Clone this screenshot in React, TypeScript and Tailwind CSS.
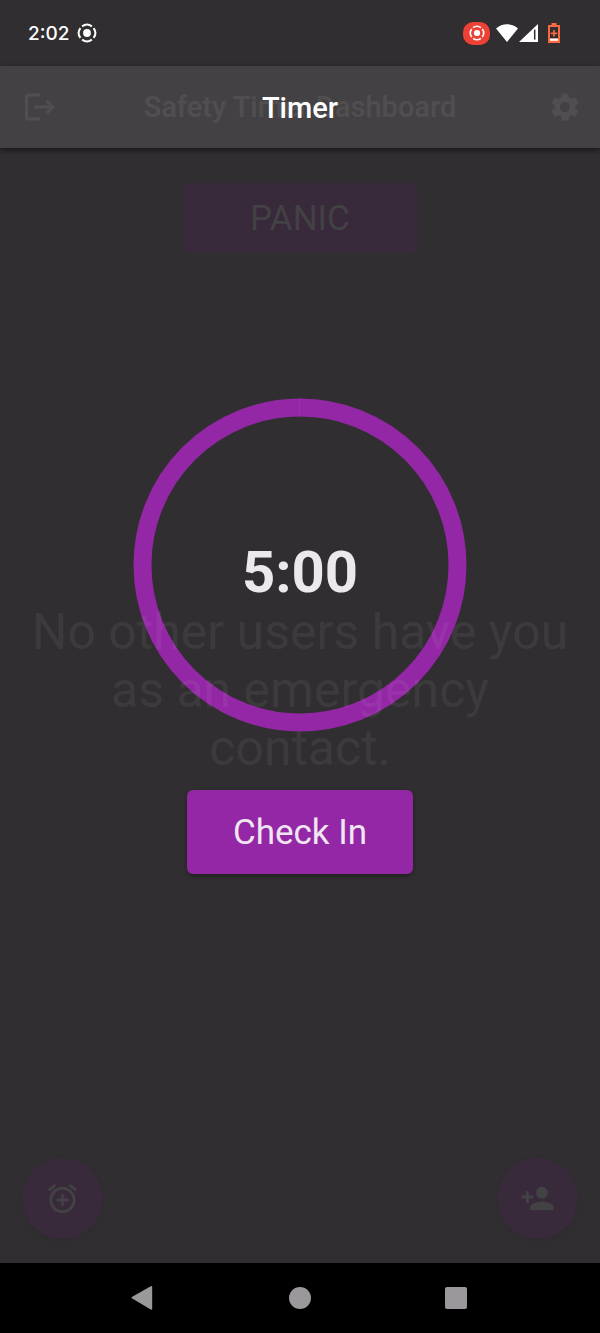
import React from "react";
import { MdAddAlarm, MdLogout, MdPersonAdd, MdSettings } from "react-icons/md";

function RecordIcon({ className }: { className: string }) {
  return (
    <svg viewBox="0 0 20 20" className={className} fill="none" aria-hidden="true">
      <circle cx="10" cy="10" r="3.9" fill="currentColor" />
      <g stroke="currentColor" strokeWidth="2">
        <path d="M5.1 3.4A8.2 8.2 0 0 1 14.9 3.4" />
        <path d="M16.6 5.1A8.2 8.2 0 0 1 16.6 14.9" />
        <path d="M14.9 16.6A8.2 8.2 0 0 1 5.1 16.6" />
        <path d="M3.4 14.9A8.2 8.2 0 0 1 3.4 5.1" />
      </g>
    </svg>
  );
}

function StatusBar() {
  return (
    <div className="flex h-[66px] items-center bg-[#302e30] pr-10 pl-7 text-white">
      <span className="pt-0.5 font-['Inter',sans-serif] text-[19px] leading-6 font-medium">2:02</span>
      <RecordIcon className="ml-2 size-5" />
      <div className="ml-auto flex items-center">
        <span className="flex h-[23px] w-[27px] items-center justify-center rounded-[10px] bg-[#ec4135]">
          <RecordIcon className="size-4" />
        </span>
        <svg viewBox="0 0 22 18" className="ml-1.5 h-[18px] w-[22px]" aria-hidden="true">
          <path d="M0 4.6C6 -1.2 16 -1.2 22 4.6L11 18Z" fill="currentColor" />
        </svg>
        <svg viewBox="0 0 19 18" className="ml-px h-[18px] w-[19px]" aria-hidden="true">
          <path d="M0 18L19 0V18Z" fill="currentColor" />
          <path d="M15.7 5.6V15.6" stroke="#302e30" strokeWidth="1.5" />
        </svg>
        <svg viewBox="0 0 12 20" className="ml-2.5 h-5 w-3" aria-hidden="true">
          <path d="M3.5 0H8.5V2H12V20H0V2H3.5Z" fill="#f9683e" />
          <path d="M2 4H10V15.5H2Z" fill="#302e30" />
          <path d="M6 7V13.6M2.8 10.3H9.2" stroke="#f9683e" strokeWidth="1.7" />
          <path d="M2 15.5H10V17.8H2Z" fill="#fff" />
        </svg>
      </div>
    </div>
  );
}

function TimerScreen() {
  return (
    <section className="col-start-1 row-start-1 flex flex-col">
      <header className="flex h-[82px] items-center justify-center bg-[#434143] pt-0.5 shadow-[0_2px_6px_rgba(0,0,0,0.55)]">
        <h1 className="text-[29px] leading-9 font-medium text-white">Timer</h1>
      </header>
      <div className="flex flex-1 flex-col items-center justify-center pb-[140px]">
        <div className="grid place-items-center">
          <svg viewBox="0 0 334 334" className="col-start-1 row-start-1 size-[334px]" aria-hidden="true">
            <circle cx="167" cy="167" r="157.5" fill="none" stroke="#9327a5" strokeWidth="18" />
            <path d="M166.5 0.5V18.5" stroke="#9a33ab" strokeWidth="1" />
          </svg>
          <p className="col-start-1 row-start-1 pt-3.5 text-[58px] leading-[68px] font-bold text-[#ebe9eb]">
            5:00
          </p>
        </div>
        <button
          type="button"
          className="mt-[58px] h-[84px] w-[226px] rounded-md bg-[#9327a5] pt-0.5 text-[35px] leading-10 text-[#f0e6f2] shadow-[0_2px_4px_rgba(0,0,0,0.35)]"
        >
          Check In
        </button>
      </div>
    </section>
  );
}

function DashboardScreen() {
  return (
    <section className="pointer-events-none col-start-1 row-start-1 flex flex-col">
      <header className="grid h-[82px] grid-cols-[36px_1fr_36px] items-center px-[22px] text-white/7">
        <button type="button" aria-label="Log out">
          <MdLogout className="size-9" />
        </button>
        <h2 className="text-center text-[29px] leading-9 font-medium">Safety Timer Dashboard</h2>
        <button type="button" aria-label="Settings" className="-mr-2 justify-self-end pr-1">
          <MdSettings className="size-[34px]" />
        </button>
      </header>
      <button
        type="button"
        className="mt-[35px] h-[70px] w-[235px] self-center rounded-md bg-[#38293b] pt-0.5 text-[35px] leading-10 text-[#424143]"
      >
        PANIC
      </button>
      <p className="flex flex-1 items-center px-6 text-center text-[50px] leading-[58px] text-white/6">
        No other users have you as an emergency contact.
      </p>
      <div className="flex justify-between px-[22px] pt-[31px] pb-6 text-[#424143]">
        <button
          type="button"
          aria-label="Add timer"
          className="grid size-[81px] place-items-center rounded-full bg-[#38293b] shadow-[0_3px_8px_rgba(0,0,0,0.05)]"
        >
          <MdAddAlarm className="size-[35px]" />
        </button>
        <button
          type="button"
          aria-label="Add contact"
          className="grid size-[81px] place-items-center rounded-full bg-[#38293b] shadow-[0_3px_8px_rgba(0,0,0,0.05)]"
        >
          <MdPersonAdd className="size-[35px]" />
        </button>
      </div>
    </section>
  );
}

function NavigationBar() {
  return (
    <nav className="grid h-[70px] grid-cols-3 place-items-center bg-black px-[66px] text-[#9b989b]">
      <button type="button" aria-label="Back">
        <svg viewBox="0 0 26 26" className="size-[26px]" fill="currentColor" aria-hidden="true">
          <path d="M1.2 11.7L19.8 1.2Q21.2 .6 21.2 2V23.6Q21.2 25.2 19.8 24.5L1.2 13.6Q-.2 12.6 1.2 11.7Z" />
        </svg>
      </button>
      <button type="button" aria-label="Home" className="size-[22px] rounded-full bg-[#9b989b]" />
      <button type="button" aria-label="Recent apps" className="size-[22px] rounded-xs bg-[#9b989b]" />
    </nav>
  );
}

export default function App() {
  return (
    <div className="flex min-h-screen flex-col bg-[#302e30] font-['Roboto',sans-serif]">
      <StatusBar />
      <main className="grid flex-1">
        <TimerScreen />
        <DashboardScreen />
      </main>
      <NavigationBar />
    </div>
  );
}
